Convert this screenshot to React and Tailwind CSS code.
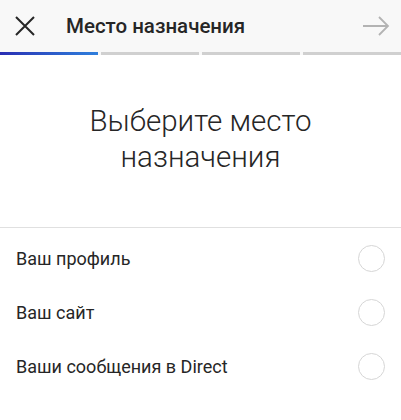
import React from "react";

const options = ["Ваш профиль", "Ваш сайт", "Ваши сообщения в Direct"];

export default function App() {
  return (
    <div className="w-[401px] h-[420px] bg-white font-['Roboto',sans-serif] overflow-hidden">
      <div className="bg-[#f8f8f8]">
        <div className="h-[52px] flex items-center">
          <svg width="22" height="22" viewBox="0 0 22 22" className="ml-[14px]">
            <path d="M2 2 L20 20 M20 2 L2 20" stroke="#262626" strokeWidth="2" />
          </svg>
          <h1 className="ml-[30px] text-[20.5px] font-medium text-[#262626] flex-1">
            Место назначения
          </h1>
          <svg width="28" height="20" viewBox="0 0 28 20" className="mr-[11px]">
            <path d="M1 10 H26 M17 1 L26 10 L17 19" stroke="#b3b3b3" strokeWidth="1.8" fill="none" />
          </svg>
        </div>
        <div className="flex gap-[3px] h-[3px]">
          <div className="flex-1 bg-gradient-to-r from-[#2a2db3] to-[#2f7fdc]" />
          <div className="flex-1 bg-[#d0d0d0]" />
          <div className="flex-1 bg-[#d0d0d0]" />
          <div className="flex-1 bg-[#d0d0d0]" />
        </div>
      </div>
      <div className="h-[173px] flex items-center justify-center border-b border-[#e0e0e0]">
        <h2 className="text-[29.5px] leading-[36px] font-light text-[#262626] text-center mt-[-4px]">
          Выберите место
          <br />
          назначения
        </h2>
      </div>
      <div className="pt-[3px]">
        {options.map((o) => (
          <div key={o} className="h-[54px] flex items-center justify-between pl-[16px] pr-[16px]">
            <span className="text-[18px] text-[#262626]">{o}</span>
            <div className="w-[27px] h-[27px] rounded-full border-[1.5px] border-[#d6d6d6]" />
          </div>
        ))}
      </div>
    </div>
  );
}
